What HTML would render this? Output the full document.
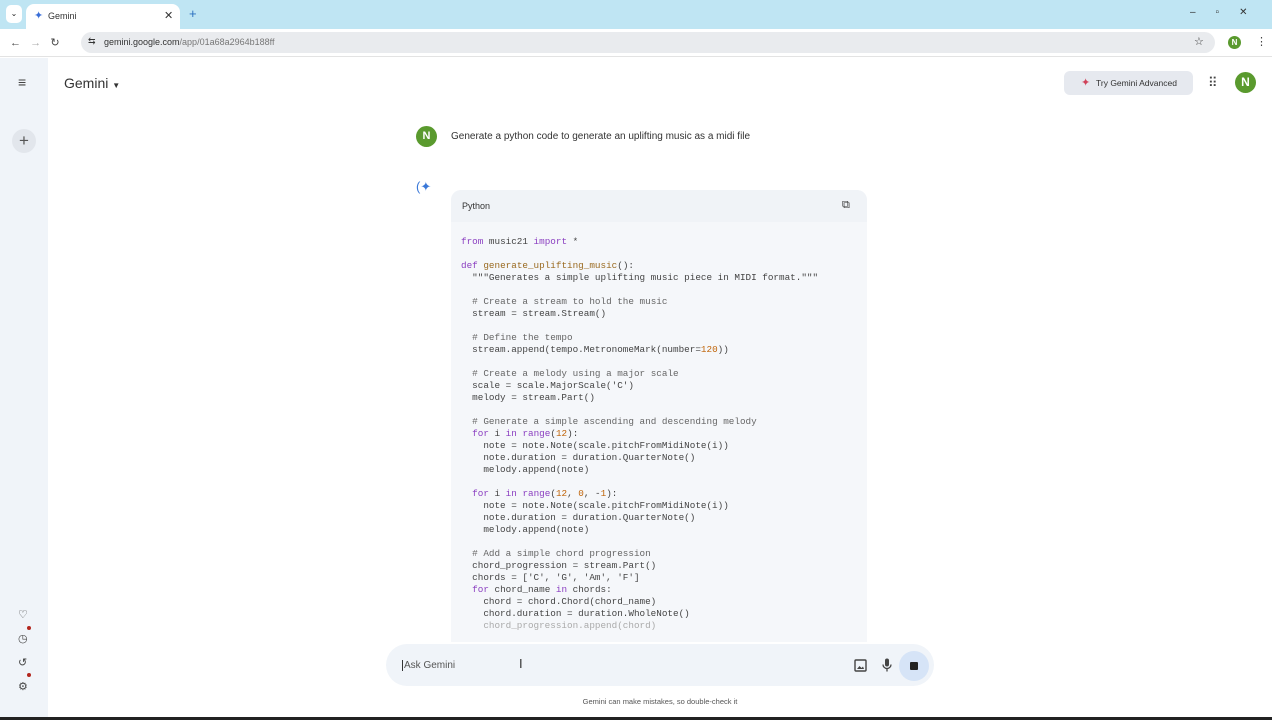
<!DOCTYPE html>
<html><head><meta charset="utf-8"><style>
*{margin:0;padding:0;box-sizing:border-box}
body{width:1272px;height:720px;overflow:hidden;background:#fff;font-family:"Liberation Sans",sans-serif;position:relative;color:#1f1f1f}
.abs{position:absolute}
.tabbar{left:0;top:0;width:1272px;height:29px;background:#bfe5f3}
.tab{left:26px;top:4px;width:154px;height:25px;background:#fff;border-radius:8px 8px 0 0;font-size:9px;color:#333}
.addr{left:0;top:29px;width:1272px;height:28px;background:#fff;border-bottom:1px solid #e3e3e3}
.url{left:81px;top:32px;width:1134px;height:21px;background:#e9ebee;border-radius:11px;font-size:9px;color:#333}
.side{left:0;top:58px;width:48px;height:659px;background:#f0f4f9}
.code{font-family:"Liberation Mono",monospace;font-size:9.3px;line-height:12px;white-space:pre;color:#444;left:461px;top:236px}
.k{color:#8a3ec0}.f{color:#9a6a20}.n{color:#c0650a}.c{color:#666}
.av{border-radius:50%;background:#5a9a2e;color:#fff;font-weight:bold;text-align:center}
</style></head><body>
<div class="abs tabbar"></div>
<div class="abs" style="left:6px;top:5px;width:16px;height:18px;background:#fff;border-radius:5px;font-size:8px;text-align:center;line-height:18px">&#8964;</div>
<div class="abs tab"><span class="abs" style="left:8px;top:5px;color:#3a6fd8;font-size:11px">✦</span><span class="abs" style="left:22px;top:7px">Gemini</span><span class="abs" style="left:138px;top:5px;font-size:11px">✕</span></div>
<div class="abs" style="left:189px;top:6px;color:#2a6fbf;font-size:13px">+</div>
<div class="abs" style="left:1190px;top:7px;font-size:10px;color:#333;letter-spacing:20px">–▫✕</div>
<div class="abs addr"></div>
<div class="abs" style="left:10px;top:36px;font-size:11px;color:#444">←&nbsp;&nbsp;&nbsp;<span style="color:#aaa">→</span>&nbsp;&nbsp;&nbsp;↻</div>
<div class="abs url"><span class="abs" style="left:7px;top:4px;font-size:9px">⇆</span><span class="abs" style="left:23px;top:5px">gemini.google.com<span style="color:#777">/app/01a68a2964b188ff</span></span><span class="abs" style="left:1113px;top:3px;font-size:11px">☆</span></div>
<div class="abs av" style="left:1228px;top:36px;width:13px;height:13px;font-size:8px;line-height:13px">N</div>
<div class="abs" style="left:1256px;top:35px;font-size:11px;color:#444">⋮</div>
<div class="abs side"></div>
<div class="abs" style="left:18px;top:74px;font-size:14px;color:#444">≡</div>
<div class="abs" style="left:12px;top:129px;width:24px;height:24px;border-radius:50%;background:#e2e6ec;text-align:center;line-height:23px;font-size:17px;color:#555">+</div>
<div class="abs" style="left:18px;top:603px;font-size:11px;color:#444;line-height:24px">♡<br>◷<br>↺<br>⚙</div>
<div class="abs" style="left:27px;top:626px;width:4px;height:4px;border-radius:50%;background:#b3261e"></div>
<div class="abs" style="left:27px;top:673px;width:4px;height:4px;border-radius:50%;background:#b3261e"></div>
<div class="abs" style="left:64px;top:75px;font-size:14px;color:#333">Gemini <span style="font-size:8px">▼</span></div>
<div class="abs" style="left:1064px;top:71px;width:129px;height:24px;background:#e6e9ef;border-radius:6px;font-size:8.5px;line-height:24px;padding-left:17px;color:#333"><span class="abs" style="left:17px;color:#d0435a;font-size:11px;top:0">✦</span><span style="padding-left:15px">Try Gemini Advanced</span></div>
<div class="abs" style="left:1208px;top:75px;font-size:13px;color:#444;letter-spacing:-1px">⠿</div>
<div class="abs av" style="left:1235px;top:72px;width:21px;height:21px;font-size:12px;line-height:21px">N</div>
<div class="abs av" style="left:416px;top:126px;width:21px;height:21px;font-size:11px;line-height:21px">N</div>
<div class="abs" style="left:451px;top:131px;font-size:10px;color:#333">Generate a python code to generate an uplifting music as a midi file</div>
<div class="abs" style="left:416px;top:179px;font-size:13px;color:#3a78d8">(✦</div>
<div class="abs" style="left:451px;top:190px;width:416px;height:452px;background:#f5f7fa;border-radius:10px 10px 0 0"></div>
<div class="abs" style="left:451px;top:190px;width:416px;height:32px;background:#f0f3f7;border-radius:10px 10px 0 0;font-size:9px;color:#333"><span class="abs" style="left:11px;top:11px">Python</span><span class="abs" style="left:391px;top:9px;font-size:11px">⧉</span></div>
<div class="abs code"><span class="k">from</span> music21 <span class="k">import</span> *

<span class="k">def</span> <span class="f">generate_uplifting_music</span>():
  """Generates a simple uplifting music piece in MIDI format."""

  <span class="c"># Create a stream to hold the music</span>
  stream = stream.Stream()

  <span class="c"># Define the tempo</span>
  stream.append(tempo.MetronomeMark(number=<span class="n">120</span>))

  <span class="c"># Create a melody using a major scale</span>
  scale = scale.MajorScale('C')
  melody = stream.Part()

  <span class="c"># Generate a simple ascending and descending melody</span>
  <span class="k">for</span> i <span class="k">in</span> <span class="k">range</span>(<span class="n">12</span>):
    note = note.Note(scale.pitchFromMidiNote(i))
    note.duration = duration.QuarterNote()
    melody.append(note)

  <span class="k">for</span> i <span class="k">in</span> <span class="k">range</span>(<span class="n">12</span>, <span class="n">0</span>, -<span class="n">1</span>):
    note = note.Note(scale.pitchFromMidiNote(i))
    note.duration = duration.QuarterNote()
    melody.append(note)

  <span class="c"># Add a simple chord progression</span>
  chord_progression = stream.Part()
  chords = ['C', 'G', 'Am', 'F']
  <span class="k">for</span> chord_name <span class="k">in</span> chords:
    chord = chord.Chord(chord_name)
    chord.duration = duration.WholeNote()
<span style="color:#aaa">    chord_progression.append(chord)</span></div>
<div class="abs" style="left:386px;top:644px;width:548px;height:42px;background:#f0f4f9;border-radius:21px"></div>
<div class="abs" style="left:402px;top:660px;font-size:10px;color:#555;border-left:1px solid #333;padding-left:1px">Ask Gemini</div>
<div class="abs" style="left:519px;top:656px;font-size:13px;color:#333">I</div>
<svg class="abs" style="left:854px;top:659px" width="13" height="13" viewBox="0 0 13 13"><rect x="1" y="1" width="11" height="11" rx="1" fill="none" stroke="#444" stroke-width="1.4"/><path d="M3 10l2.5-3 2 2 1.5-1.5L10 10z" fill="#444"/></svg>
<svg class="abs" style="left:882px;top:658px" width="10" height="14" viewBox="0 0 10 14"><rect x="3" y="0.5" width="4" height="8" rx="2" fill="#444"/><path d="M1 6.5a4 4 0 0 0 8 0M5 10.5v3" fill="none" stroke="#444" stroke-width="1.3"/></svg>
<div class="abs" style="left:899px;top:651px;width:30px;height:30px;border-radius:50%;background:#d6e4f7"></div>
<div class="abs" style="left:910px;top:662px;width:8px;height:8px;background:#222;border-radius:1px"></div>
<div class="abs" style="left:0;top:697px;width:1272px;text-align:center;padding-left:48px;font-size:7.5px;color:#555">Gemini can make mistakes, so double-check it</div>
<div class="abs" style="left:0;top:717px;width:1272px;height:3px;background:#222"></div>
</body></html>
